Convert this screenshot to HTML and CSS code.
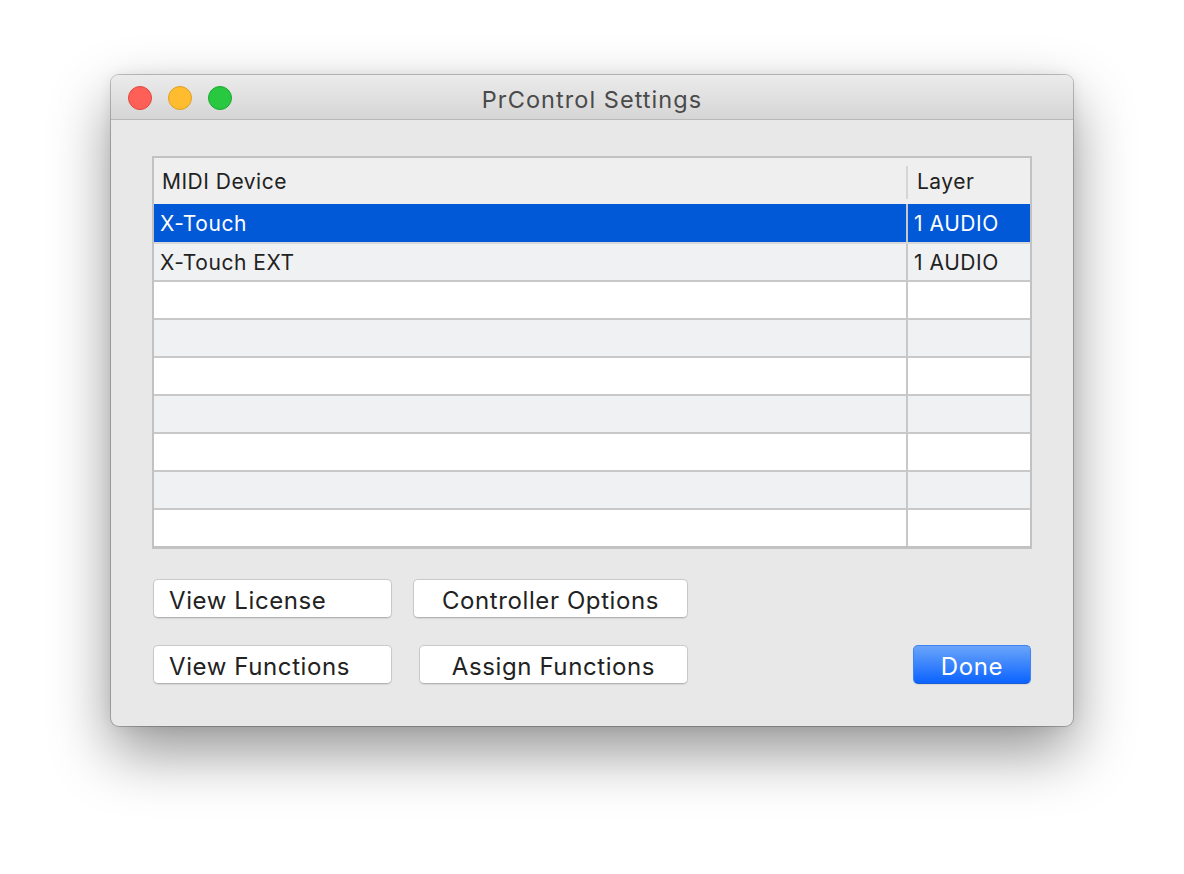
FILE: index.html
```html
<!DOCTYPE html>
<html>
<head>
<meta charset="utf-8">
<link rel="stylesheet" href="styles.css">
</head>
<body>
<div class="window">
  <div class="titlebar">
    <div class="lights">
      <span class="light red"></span>
      <span class="light yellow"></span>
      <span class="light green"></span>
    </div>
    <div class="title">PrControl Settings</div>
  </div>
  <div class="content">
    <div class="table">
      <div class="thead">
        <div class="hcell c1">MIDI Device</div>
        <div class="hsep"></div>
        <div class="hcell c2">Layer</div>
      </div>
      <div class="row selected"><div class="cell c1">X-Touch</div><div class="cell c2">1 AUDIO</div></div>
      <div class="row alt"><div class="cell c1">X-Touch EXT</div><div class="cell c2">1 AUDIO</div></div>
      <div class="row"><div class="cell c1"></div><div class="cell c2"></div></div>
      <div class="row alt"><div class="cell c1"></div><div class="cell c2"></div></div>
      <div class="row"><div class="cell c1"></div><div class="cell c2"></div></div>
      <div class="row alt"><div class="cell c1"></div><div class="cell c2"></div></div>
      <div class="row"><div class="cell c1"></div><div class="cell c2"></div></div>
      <div class="row alt"><div class="cell c1"></div><div class="cell c2"></div></div>
      <div class="row"><div class="cell c1"></div><div class="cell c2"></div></div>
    </div>
    <div class="buttons">
      <div class="brow r1">
        <button class="btn left w1">View License</button>
        <button class="btn w2">Controller Options</button>
      </div>
      <div class="brow r2">
        <button class="btn left w1">View Functions</button>
        <button class="btn w3">Assign Functions</button>
        <button class="btn done">Done</button>
      </div>
    </div>
  </div>
</div>
</body>
</html>
```

FILE: styles.css
```css
* { box-sizing: border-box; }
html, body { margin: 0; background: #ffffff; }
body {
  min-height: 874px;
  padding: 75px 0 0 111px;
  font-family: "Inter", "Helvetica Neue", "Liberation Sans", sans-serif;
  color: #222;
}
.window {
  width: 962px;
  height: 651px;
  border-radius: 8px;
  background: #e8e8e8;
  overflow: hidden;
  box-shadow: 0 0 0 1px rgba(0,0,0,0.22), 0 26px 60px rgba(0,0,0,0.42), 0 0 14px rgba(0,0,0,0.08);
}
.titlebar {
  height: 45px;
  background: linear-gradient(#ebebeb, #d5d5d5);
  border-bottom: 1px solid #b8b8b8;
  display: flex;
  align-items: center;
  position: relative;
}
.lights {
  display: flex;
  gap: 16px;
  padding-left: 17px;
  position: absolute;
  left: 0;
  top: 11px;
}
.light {
  width: 24px;
  height: 24px;
  border-radius: 50%;
  display: block;
}
.red { background: #fe5f57; border: 1px solid #e1473f; }
.yellow { background: #febc2e; border: 1px solid #dfa024; }
.green { background: #28c840; border: 1px solid #1ca92e; }
.title {
  flex: 1;
  text-align: center;
  font-size: 23.5px;
  letter-spacing: 1.05px;
  color: #4a4a4a;
  padding-top: 4px;
}
.content {
  padding: 36px 41px 0 41px;
}
.table {
  width: 880px;
  border: 2px solid #c2c2c2;
  border-bottom-width: 3px;
  background: #fff;
}
.thead {
  height: 46px;
  background: #efefef;
  display: flex;
  align-items: center;
}
.hcell { font-size: 21px; letter-spacing: 0.5px; color: #222; }
.hcell.c1 { width: 752px; padding-left: 8px; }
.hsep { width: 2px; height: 33px; background: #d6d6d6; align-self: center; margin-top: 2px; }
.hcell.c2 { padding-left: 9px; }
.row {
  height: 38px;
  display: flex;
  border-top: 2px solid #c8c8c8;
  background: #fff;
}
.row.selected { border-top: none; background: #0159d8; color: #fff; }
.row.alt { background: #f0f1f2; }
.row.selected + .row { border-top-color: #d8d8d8; }
.cell {
  font-size: 21px;
  letter-spacing: 0.55px;
  display: flex;
  align-items: center;
}
.cell.c1 { width: 752px; padding-left: 6px; }
.cell.c2 { flex: 1; border-left: 2px solid #c8c8c8; padding-left: 6px; }
.buttons {
  margin-top: 30px;
  display: flex;
  flex-direction: column;
  gap: 27px;
}
.brow { display: flex; align-items: center; padding-left: 1px; padding-right: 1px; }
.r1 { gap: 21px; }
.r2 { gap: 27px; }
.btn {
  height: 39px;
  background: #fff;
  border: 1px solid #c9c9c9;
  border-bottom-color: #b3b3b3;
  border-radius: 5px;
  box-shadow: 0 1px 1px rgba(0,0,0,0.08);
  font-family: inherit;
  font-size: 24px;
  letter-spacing: 0.6px;
  color: #222;
  padding: 3px 0 0 0;
  text-align: center;
}
.btn.left { text-align: left; padding-left: 15px; }
.w1 { width: 239px; }
.w2 { width: 275px; }
.w3 { width: 269px; }
.btn.done {
  margin-left: auto;
  width: 118px;
  background: linear-gradient(#6aa5fa, #0b63ff);
  border: 1px solid #3f84f2;
  border-bottom-color: #1a5ed8;
  color: #fff;
}
```
